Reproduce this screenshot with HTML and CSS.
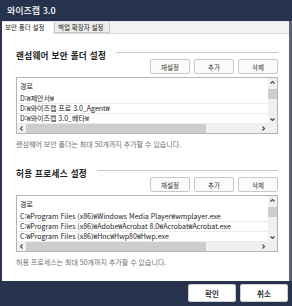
FILE: index.html
```html
<!DOCTYPE html>
<html lang="ko">
<head>
  <meta charset="UTF-8">
  <meta name="viewport" content="width=device-width, initial-scale=1.0">
  <title>와이즈캡 3.0</title>
  <link rel="stylesheet" href="styles.css">
</head>
<body>
  <div class="window">
    <div class="titlebar">와이즈캡 3.0</div>
    <div class="frame">
      <div class="tabs">
        <div class="tab active">보안 폴더 설정</div>
        <div class="tab">백업 확장자 설정</div>
      </div>
      <div class="content">
        <section class="group">
          <div class="group-title"><h2>랜섬웨어 보안 폴더 설정</h2><span class="rule"></span></div>
          <div class="actions">
            <button class="btn">재설정</button>
            <button class="btn">추가</button>
            <button class="btn">삭제</button>
          </div>
          <div class="list">
            <div class="list-body">
              <div class="list-head">경로</div>
              <div class="row">D:₩제안서₩</div>
              <div class="row">D:₩와이즈캡 프로 3.0_Agent₩</div>
              <div class="row">D:₩와이즈캡 3.0_베타₩</div>
            </div>
            <div class="vscroll">
              <svg class="arrow" viewBox="0 0 9 9"><path d="M2.5 5.5 L4.5 3.5 L6.5 5.5" /></svg>
              <span class="vthumb"></span>
              <span class="vtrack"></span>
              <svg class="arrow" viewBox="0 0 9 9"><path d="M2.5 3.5 L4.5 5.5 L6.5 3.5" /></svg>
            </div>
            <div class="hscroll">
              <svg class="arrow" viewBox="0 0 9 9"><path d="M5.5 2.5 L3.5 4.5 L5.5 6.5" /></svg>
              <span class="hthumb"></span>
              <span class="htrack"></span>
              <svg class="arrow" viewBox="0 0 9 9"><path d="M3.5 2.5 L5.5 4.5 L3.5 6.5" /></svg>
            </div>
            <div class="corner"></div>
          </div>
          <p class="hint">랜섬웨어 보안 폴더는 최대 50개까지 추가할 수 있습니다.</p>
        </section>

        <section class="group second">
          <div class="group-title"><h2>허용 프로세스 설정</h2><span class="rule"></span></div>
          <div class="actions">
            <button class="btn">재설정</button>
            <button class="btn">추가</button>
            <button class="btn">삭제</button>
          </div>
          <div class="list">
            <div class="list-body">
              <div class="list-head">경로</div>
              <div class="row">C:₩Program Files (x86)₩Windows Media Player₩wmplayer.exe</div>
              <div class="row">C:₩Program Files (x86)₩Adobe₩Acrobat 8.0₩Acrobat₩Acrobat.exe</div>
              <div class="row">C:₩Program Files (x86)₩Hnc₩Hwp80₩Hwp.exe</div>
            </div>
            <div class="vscroll">
              <svg class="arrow" viewBox="0 0 9 9"><path d="M2.5 5.5 L4.5 3.5 L6.5 5.5" /></svg>
              <span class="vthumb"></span>
              <span class="vtrack"></span>
              <svg class="arrow" viewBox="0 0 9 9"><path d="M2.5 3.5 L4.5 5.5 L6.5 3.5" /></svg>
            </div>
            <div class="hscroll">
              <svg class="arrow" viewBox="0 0 9 9"><path d="M5.5 2.5 L3.5 4.5 L5.5 6.5" /></svg>
              <span class="hthumb"></span>
              <span class="htrack"></span>
              <svg class="arrow" viewBox="0 0 9 9"><path d="M3.5 2.5 L5.5 4.5 L3.5 6.5" /></svg>
            </div>
            <div class="corner"></div>
          </div>
          <p class="hint">허용 프로세스는 최대 50개까지 추가할 수 있습니다.</p>
        </section>
      </div>
    </div>
    <div class="footer">
      <button class="btn big">확인</button>
      <button class="btn big">취소</button>
    </div>
  </div>
</body>
</html>
```

FILE: styles.css
```css
* {
  box-sizing: border-box;
}
body {
  margin: 0;
  font-family: "Noto Sans CJK KR", "Noto Sans", sans-serif;
  background-color: #ffffff;
  color: #222222;
}
.window {
  width: 292px;
  height: 306px;
  display: flex;
  flex-direction: column;
  background-color: #27324d;
}
.titlebar {
  height: 21px;
  padding-left: 7px;
  line-height: 21px;
  font-size: 9px;
  font-weight: 500;
  color: #ffffff;
}
.frame {
  flex: 1;
  display: flex;
  flex-direction: column;
  background-color: #ffffff;
  border-left: 2px solid #2b3550;
  border-right: 3px solid #5d6372;
}
.tabs {
  height: 13px;
  display: flex;
  background-color: #f2f2f2;
  border-top: 1px solid #e2e2e2;
  border-bottom: 1px solid #dadada;
}
.tab {
  font-size: 6.5px;
  line-height: 11px;
  padding: 0 3px;
  color: #222222;
  white-space: nowrap;
}
.tab.active {
  background-color: #ffffff;
  width: 51px;
  height: 12px;
}
.tab + .tab {
  background-color: #ececec;
  border: 1px solid #c9c9c9;
  border-top: none;
  margin-left: 1px;
  width: 56px;
  line-height: 10px;
}
.content {
  flex: 1;
  padding: 16px 11px 0 14px;
}
.group.second {
  margin-top: 19px;
}
.group-title {
  height: 9px;
  display: flex;
  align-items: flex-start;
}
.group-title h2 {
  margin: 0;
  font-size: 8.6px;
  line-height: 11px;
  font-weight: bold;
  letter-spacing: 0.3px;
  color: #222222;
  white-space: nowrap;
}
.rule {
  flex: 1;
  margin: 2px 0 0 10px;
  border-top: 1px solid #c9c9c9;
}
.actions {
  height: 15px;
  display: flex;
  justify-content: flex-end;
  gap: 4px;
}
.btn {
  width: 40px;
  height: 15px;
  padding: 0;
  font-family: inherit;
  font-size: 6.5px;
  color: #333333;
  background-color: #fbfbfb;
  border: 1px solid #c8c8c8;
  border-radius: 2px;
}
.list {
  margin-top: 3px;
  height: 57px;
  display: grid;
  grid-template-columns: 1fr 9px;
  grid-template-rows: 1fr 9px;
  border: 1px solid #b4b4b4;
  font-size: 7px;
}
.list-body {
  overflow: hidden;
}
.list-head {
  height: 16px;
  line-height: 16px;
  padding-left: 3px;
}
.row {
  height: 10px;
  line-height: 9px;
  padding-left: 3px;
  white-space: nowrap;
  border-bottom: 1px solid #ececec;
}
.vscroll {
  display: flex;
  flex-direction: column;
  background-color: #f0f0f0;
}
.vthumb {
  height: 10px;
  margin-top: 2px;
  background-color: #cdcdcd;
}
.vtrack {
  flex: 1;
}
.hscroll {
  display: flex;
  background-color: #f0f0f0;
}
.hthumb {
  width: 180px;
  background-color: #cdcdcd;
}
.htrack {
  flex: 1;
}
.corner {
  background-color: #f0f0f0;
}
.arrow {
  width: 9px;
  height: 9px;
  flex: none;
  fill: none;
  stroke: #444444;
  stroke-width: 1.1;
}
.hint {
  margin: 5px 0 0;
  font-size: 7px;
  line-height: 10px;
  color: #707070;
  white-space: nowrap;
}
.footer {
  height: 25px;
  display: flex;
  justify-content: flex-end;
  gap: 4px;
  padding: 3px 4px 0 0;
}
.btn.big {
  width: 48px;
  height: 18px;
  font-size: 7.5px;
  font-weight: bold;
  background-color: #ffffff;
  border-color: #d0d0d0;
}
```
